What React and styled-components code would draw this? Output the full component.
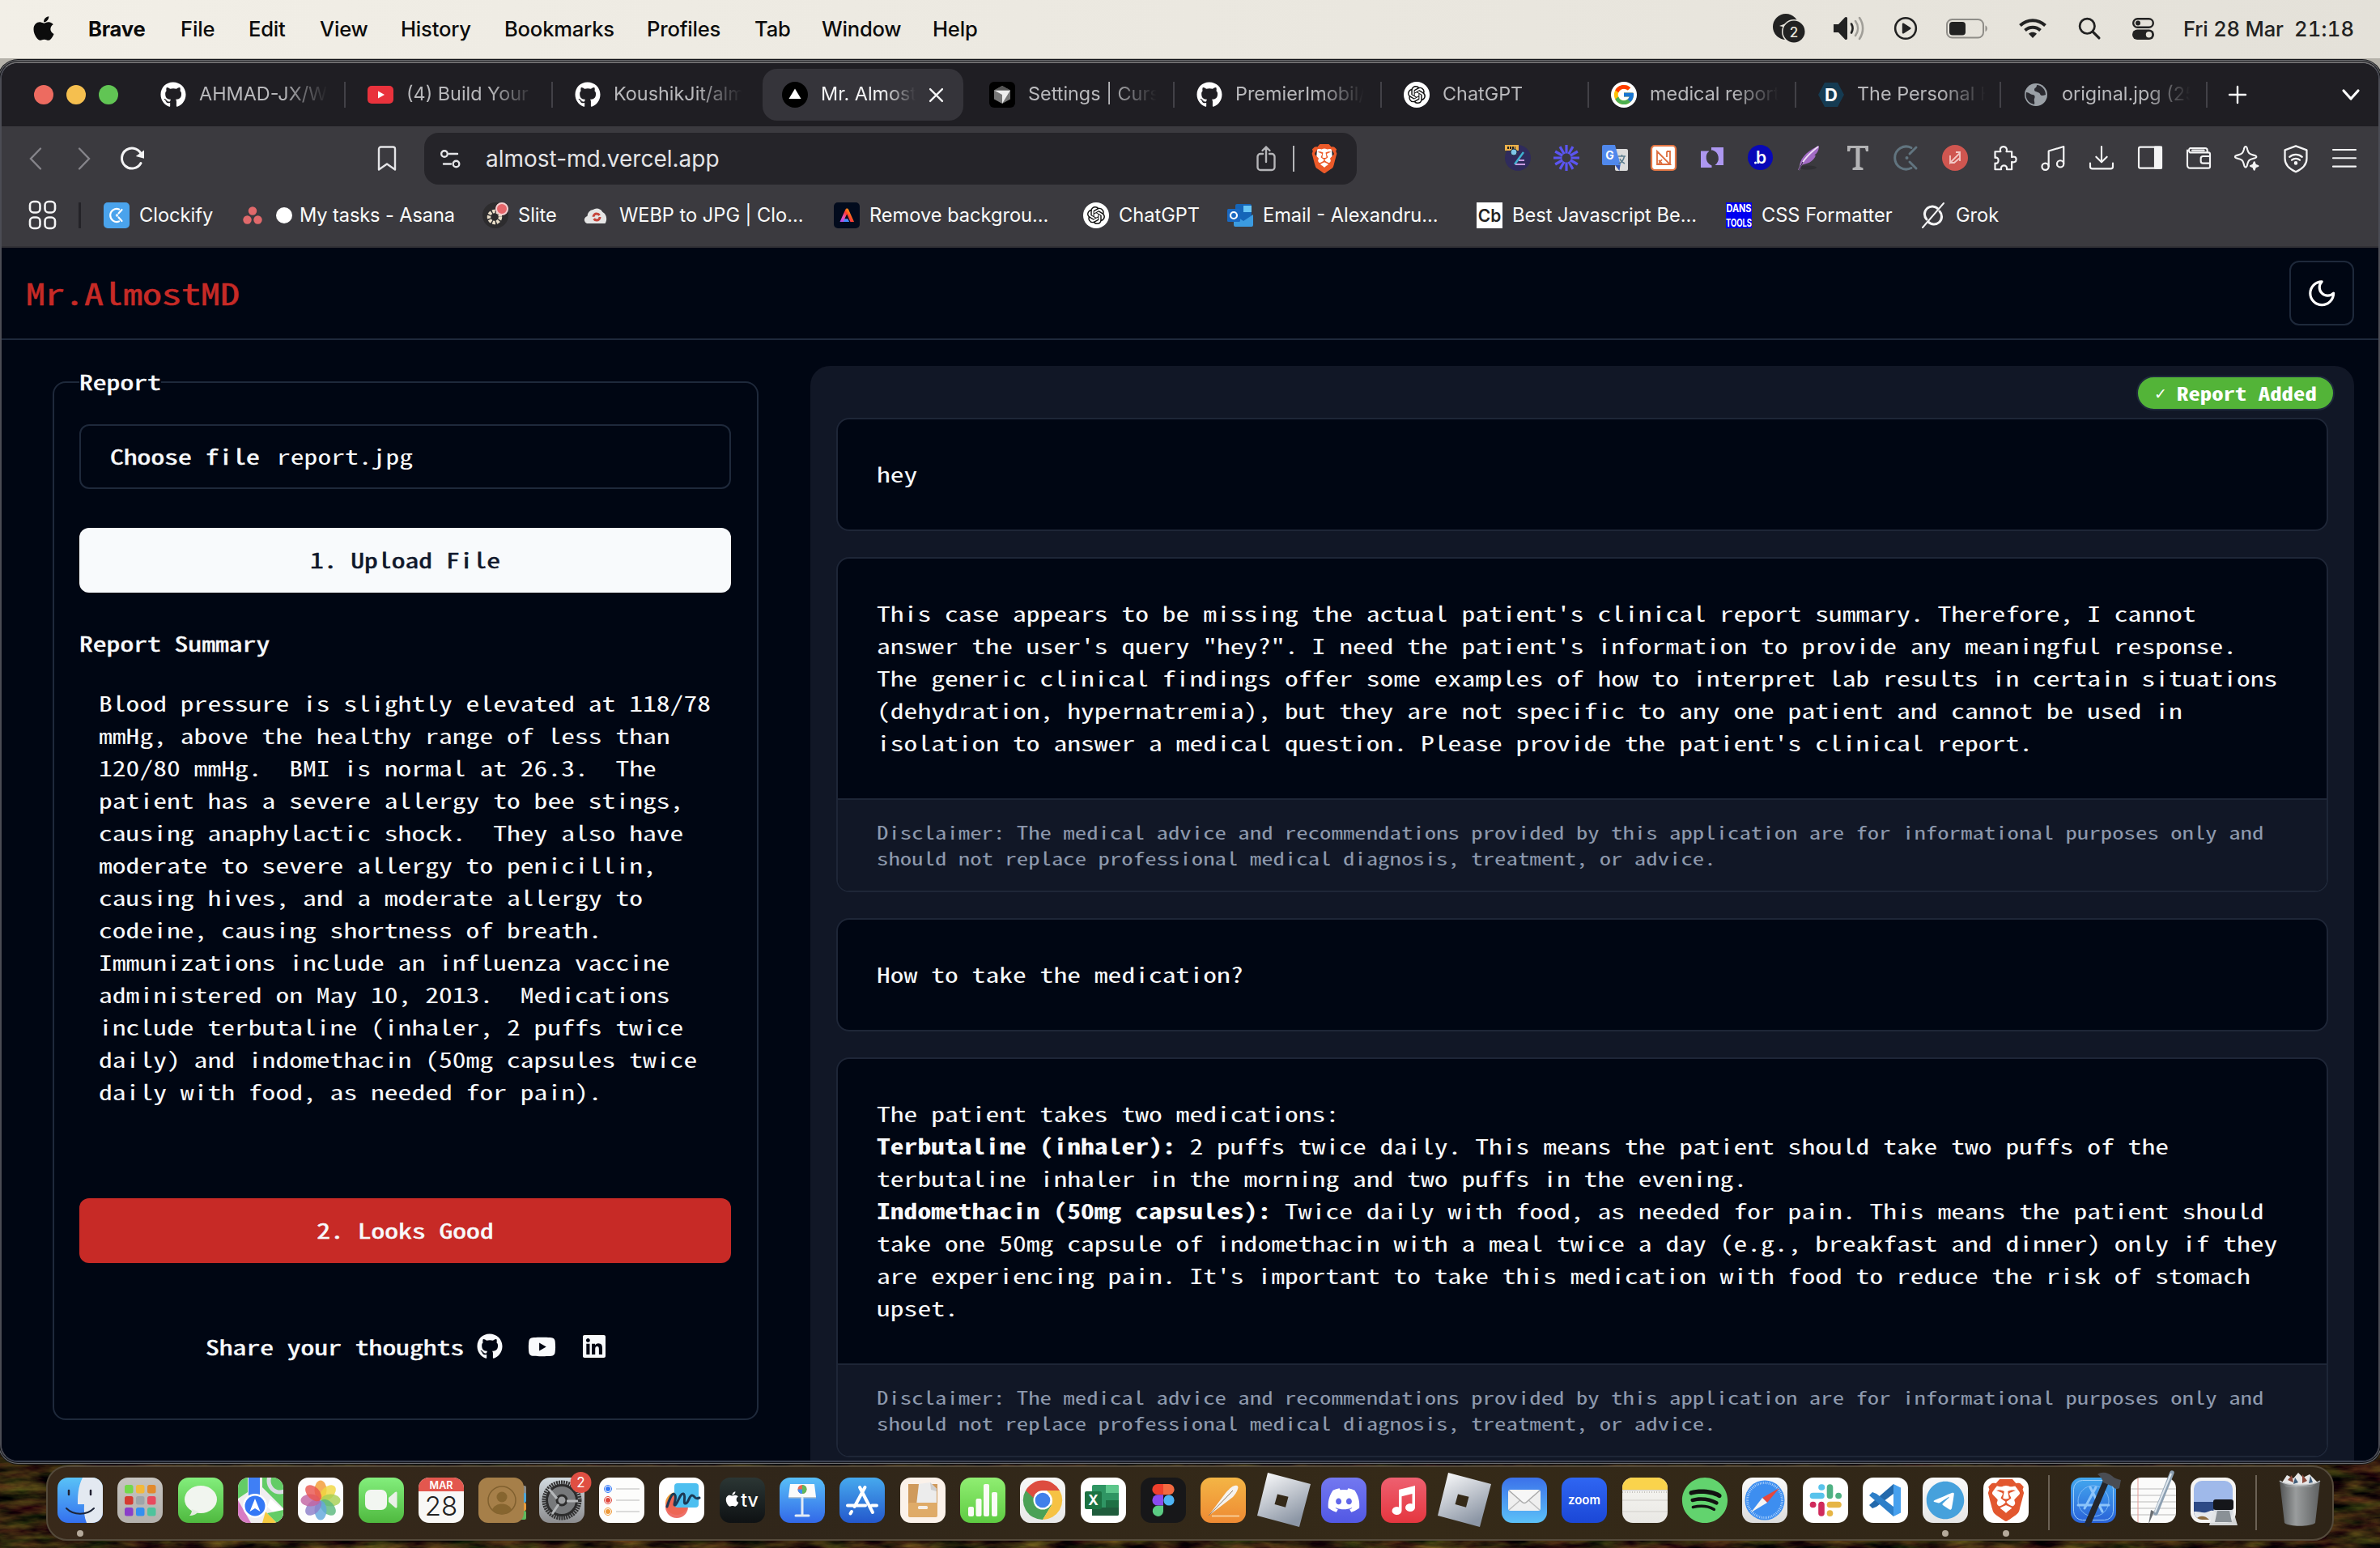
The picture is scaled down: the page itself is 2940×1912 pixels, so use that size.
import React from "react";
import styled, { createGlobalStyle, css } from "styled-components";
import { FaApple, FaGithub, FaYoutube, FaLinkedin, FaDiscord } from "react-icons/fa";
import { FaSpotify, FaTelegram } from "react-icons/fa6";
import { FcGoogle } from "react-icons/fc";
import { SiOpenai, SiBrave } from "react-icons/si";

const ui = '"Inter", "Liberation Sans", sans-serif';
const mono = '"Noto Sans Mono CJK SC", "Noto Sans Mono CJK JP", "DejaVu Sans Mono", monospace';

const GlobalStyle = createGlobalStyle`
  * { box-sizing: border-box; }
  html, body { margin: 0; padding: 0; background: #20130a; overflow: hidden; }
  svg { display: block; flex: none; overflow: visible; }
`;

const Desktop = styled.div`
  position: relative;
  width: 2940px;
  height: 1912px;
  display: flex;
  flex-direction: column;
  overflow: hidden;
  font-family: ${ui};
  background: linear-gradient(#b5b2aa 0 120px, #20130a 400px);
`;

const Wallpaper = styled.svg`
  position: absolute;
  left: 0;
  bottom: 0;
`;

/* ---------- menu bar ---------- */
const MenuBar = styled.header`
  height: 72px;
  flex: none;
  display: flex;
  align-items: center;
  padding: 0 0 2px 40px;
  background: linear-gradient(90deg, #f2efe7, #ebe8e0 50%, #e4e1d9);
  color: #0c0c0c;
`;
const AppleMark = styled(FaApple)`
  width: 28px;
  height: 34px;
  margin-right: 41px;
`;
const MenuItem = styled.span`
  width: ${(p) => p.$w}px;
  flex: none;
  font-size: 25.6px;
  font-weight: ${(p) => (p.$bold ? 700 : 450)};
  letter-spacing: ${(p) => p.$ls ?? -0.2}px;
  font-variant-numeric: tabular-nums;
  white-space: nowrap;
`;
const StatusItems = styled.div`
  margin-left: auto;
  display: flex;
  align-items: center;
  color: #222;
`;
const StatusSlot = styled.div`
  width: ${(p) => p.$w}px;
  flex: none;
`;

/* ---------- browser window ---------- */
const Window = styled.div`
  position: relative;
  width: 2940px;
  height: 1730px;
  margin-top: 4px;
  flex: none;
  display: flex;
  flex-direction: column;
  overflow: hidden;
  border: 2px solid #4b4c54;
  border-top-color: #6d6c6e;
  border-bottom-color: #3d4250;
  border-radius: 22px;
  background: #000613;
  box-shadow: 0 0 0 1px #15161a, 0 0 0 2px #6f7072, 0 0 0 3px #15161a;
`;
const TabStrip = styled.div`
  height: 78px;
  flex: none;
  display: flex;
  align-items: center;
  padding-left: 40px;
  background: #1f1e23;
`;
const TrafficLights = styled.div`
  display: flex;
  gap: 16px;
  width: 129px;
`;
const Light = styled.span`
  width: 24px;
  height: 24px;
  border-radius: 50%;
  background: ${(p) => p.$c};
`;
const Tab = styled.div`
  width: ${(p) => p.$w ?? 256}px;
  height: 64px;
  flex: none;
  display: flex;
  align-items: center;
  gap: 17px;
  padding-left: 27px;
  color: #b9b9bc;
  background: linear-gradient(#424147, #424147) right center / 2px 32px no-repeat;
  ${(p) =>
    p.$plain &&
    css`
      background: none;
    `}
  ${(p) =>
    p.$active &&
    css`
      width: 248px;
      margin: 0 5px 0 3px;
      padding-left: 24px;
      color: #f4f4f5;
      background: #35343a;
      border-radius: 18px;
    `}
`;
const TabTitle = styled.span`
  width: ${(p) => (p.$active ? 117 : 159)}px;
  overflow: hidden;
  white-space: nowrap;
  font-size: 23.4px;
  line-height: 34px;
  margin: 0 0 2px -1px;
  mask-image: linear-gradient(90deg, #000 65%, transparent 100%);
`;
const StripEnd = styled.div`
  flex: 1;
  display: flex;
  align-items: center;
  justify-content: space-between;
  padding: 0 23px 0 26px;
`;

const Toolbar = styled.div`
  height: 80px;
  flex: none;
  display: flex;
  align-items: center;
  background: #3b3a3f;
  padding-left: 33px;
`;
const NavButtons = styled.div`
  width: 431px;
  display: flex;
  align-items: center;
  gap: 42px;
  & > :last-child {
    margin-left: -6px;
  }
`;
const AddressBar = styled.div`
  width: 1152px;
  height: 64px;
  margin-left: 34px;
  padding: 0 24px 0 20px;
  display: flex;
  align-items: center;
  border-radius: 18px;
  background: #252429;
`;
const Url = styled.span`
  flex: 1;
  margin-left: 31px;
  font-size: 28px;
  color: #e4e4e7;
`;
const BarDivider = styled.span`
  width: 2px;
  height: 32px;
  margin: 0 21px;
  background: #b5b5b8;
`;
const Extensions = styled.div`
  flex: 1;
  display: flex;
  padding-left: 169px;
`;
const ExtSlot = styled.div`
  width: 60.06px;
  flex: none;
  display: flex;
  justify-content: center;
`;

const BookmarksBar = styled.div`
  height: 70px;
  flex: none;
  display: flex;
  align-items: center;
  padding: 0 0 9px 34px;
  background: #3b3a3f;
  border-bottom: 2px solid #323136;
`;
const BookmarkDivider = styled.span`
  width: 3px;
  height: 32px;
  margin: 0 28px 0 28px;
  background: #242328;
`;
const Bookmark = styled.div`
  width: ${(p) => p.$w}px;
  flex: none;
  display: flex;
  align-items: center;
  gap: 12px;
  font-size: 23.6px;
  letter-spacing: ${(p) => p.$ls ?? 0}px;
  white-space: nowrap;
  color: #fafafa;
`;
const Dot = styled.span`
  width: 20px;
  height: 20px;
  margin: 0 -3px 0 5px;
  border-radius: 50%;
  background: #fff;
`;

/* ---------- web app ---------- */
const Page = styled.div`
  flex: 1;
  min-height: 0;
  display: flex;
  flex-direction: column;
  background: #000613;
  color: #f8fafc;
  font-family: ${mono};
  line-height: 40px;
`;
const Type = styled.div`
  width: ${(p) => (p.$w ? `${p.$w}px` : "auto")};
  flex: none;
  font-size: ${(p) => p.$size ?? 26}px;
  font-weight: ${(p) => (p.$bold ? 700 : 400)};
  white-space: pre;
  -webkit-text-stroke: ${(p) => (p.$medium ? 0.5 : 0)}px currentColor;
  transform: translateY(-1px) scaleX(${(p) => ((p.$adv ?? 16.8) * 2) / (p.$size ?? 26)});
  transform-origin: ${(p) => (p.$center ? "center" : "left")};
`;
const PageHeader = styled.div`
  height: 114px;
  flex: none;
  display: flex;
  align-items: center;
  justify-content: space-between;
  padding: 0 30px;
  border-bottom: 2px solid #1e293b;
`;
const Brand = styled.h1`
  margin: 0;
  font: inherit;
  line-height: 56px;
  color: #c72a26;
`;
const ThemeButton = styled.button`
  width: 80px;
  height: 80px;
  padding: 0;
  display: flex;
  align-items: center;
  justify-content: center;
  border: 2px solid #1e293b;
  border-radius: 12px;
  background: transparent;
  color: #fff;
`;
const Columns = styled.div`
  flex: 1;
  min-height: 0;
  display: flex;
  align-items: flex-start;
  padding-left: 63px;
`;
const ReportBox = styled.fieldset`
  width: 872px;
  height: 1296px;
  margin: 38px 0 0;
  padding: 38px 32px 0 31px;
  border: 2px solid #1e293b;
  border-radius: 16px;
`;
const Legend = styled.legend`
  padding: 0;
  line-height: 28px;
`;
const FileInput = styled.div`
  height: 80px;
  padding: 0 36px;
  display: flex;
  align-items: center;
  gap: 21px;
  border: 2px solid #1e293b;
  border-radius: 12px;
`;
const Button = styled.button`
  display: block;
  width: 100%;
  height: 80px;
  margin: ${(p) => p.$top}px 0 0;
  padding: 0;
  border: 0;
  border-radius: 12px;
  font: inherit;
  color: ${(p) => (p.$danger ? "#f8fafc" : "#0f172a")};
  background: ${(p) => (p.$danger ? "#c72a26" : "#f8fafc")};
`;
const SummaryLabel = styled.div`
  margin-top: 43px;
`;
const Summary = styled.div`
  margin: 34px 0 0;
  padding-left: 24px;
`;
const ShareRow = styled.div`
  height: 48px;
  margin-top: 79px;
  display: flex;
  align-items: center;
  justify-content: center;
`;
const ShareText = styled.span`
  margin: 2px 16px 0 2px;
`;
const ShareLinks = styled.span`
  display: flex;
  align-items: center;
  gap: 31px;
`;

const Chat = styled.section`
  position: relative;
  width: 1907px;
  align-self: stretch;
  margin: 32px 0 0 64px;
  padding: 64px 32px 0;
  overflow: hidden;
  border-radius: 24px 24px 0 0;
  background: #111726;
`;
const AddedBadge = styled.div`
  position: absolute;
  top: 12px;
  right: 24px;
  height: 43px;
  width: 245px;
  display: flex;
  align-items: center;
  justify-content: center;
  gap: 14px;
  border: 2px solid #1e293b;
  border-radius: 22px;
  line-height: 36px;
  color: #fff;
  background: #53b438;
`;
const Check = styled.span`
  width: 14px;
  font-family: "DejaVu Sans", sans-serif;
  font-size: 19px;
  font-weight: 700;
`;
const Card = styled.article`
  margin-bottom: 32px;
  overflow: hidden;
  border: 2px solid #1e2637;
  border-radius: 16px;
  background: #000613;
`;
const CardBody = styled.div`
  padding: 48px;
`;
const CardFooter = styled.footer`
  padding: 24px 48px;
  border-top: 2px solid #1e2637;
  line-height: 32px;
  color: #8d99ad;
  background: #111726;
`;

/* ---------- dock ---------- */
const DockArea = styled.div`
  position: relative;
  padding: 4px 0 0 57px;
`;
const DockBar = styled.nav`
  width: 2826px;
  height: 93px;
  display: flex;
  align-items: flex-start;
  padding: 13px 0 0 3px;
  border: 2px solid #544a3b;
  border-radius: 26px;
  background: linear-gradient(90deg, #38291a, #30261a 30%, #352a18 60%, #2e2417);
`;
const DockSlot = styled.div`
  width: ${(p) => p.$w ?? 74.33}px;
  flex: none;
  display: flex;
  flex-direction: column;
  align-items: center;
  gap: 9px;
`;
const RunningDot = styled.span`
  width: 8px;
  height: 8px;
  border-radius: 50%;
  background: #b5aa9b;
`;
const DockDivider = styled.span`
  width: 2px;
  height: 68px;
  margin: ${(p) => p.$m};
  background: #6b6154;
`;

/* ---------- small drawings ---------- */
const Line = ({ s = 32, v = 24, w = 1.6, c = "#f4f4f5", children }) => (
  <svg width={s} height={s} viewBox={`0 0 ${v} ${v}`} fill="none" stroke={c} strokeWidth={w} strokeLinecap="round" strokeLinejoin="round">
    {children}
  </svg>
);
const Pic = ({ s = 32, children }) => (
  <svg width={s} height={s} viewBox="0 0 32 32">{children}</svg>
);
const T = (p) => <text textAnchor="middle" fontFamily="Inter, sans-serif" {...p} />;

const Github = () => <FaGithub size={32} color="#fff" />;
const ChatGpt = () => (
  <Pic>
    <circle cx="16" cy="16" r="16" fill="#fff" />
    <SiOpenai x="5" y="5" size={22} color="#111" />
  </Pic>
);
const BraveLion = ({ w = 32, h = 36 }) => (
  <svg width={w} height={h} viewBox="0 0 32 36">
    <path d="M7 6L16 4l9 2 1 12-4 9-6 5-6-5-4-9z" fill="#fff" />
    <SiBrave x="-2" y="0" size={36} color="#ec5a29" />
  </svg>
);

const tabs = [
  { t: "AHMAD-JX/WhatsApp", i: <Github /> },
  {
    t: "(4) Build Your Own",
    i: <Pic><rect y="5" width="32" height="22" rx="5" fill="#e9323c" /><path d="M13 11.500v9l8-4.500z" fill="#fff" /></Pic>,
  },
  { t: "KoushikJit/almost", i: <Github />, plain: true },
  {
    t: "Mr. AlmostMD",
    active: true,
    i: <Pic><circle cx="16" cy="16" r="16" fill="#000" /><path d="M16 8.500l7.500 12.500h-15z" fill="#fff" /></Pic>,
  },
  {
    t: "Settings | Cursor",
    i: (
      <Pic>
        <rect width="32" height="32" rx="6" fill="#000" />
        <path d="M16 5l10 5.500v11L16 27 6 21.500v-11z" fill="#777" />
        <path d="M6 10.500h20L16 27v-11z" fill="#eee" />
        <path d="M16 5l10 5.500H6z" fill="#555" />
      </Pic>
    ),
  },
  { t: "PremierImobil/app", i: <Github /> },
  { t: "ChatGPT", i: <ChatGpt /> },
  { t: "medical report im", i: <Pic><circle cx="16" cy="16" r="16" fill="#fff" /><FcGoogle x="1.500" y="1.500" size={29} /></Pic> },
  {
    t: "The Personal Ho",
    w: 253,
    i: <Pic><path d="M8 1h16l8 15-8 15H8L0 16z" fill="#153b52" /><T x="16" y="24" fontSize="22" fontWeight="700" fill="#fff">D</T></Pic>,
  },
  {
    t: "original.jpg (2552",
    w: 255,
    i: (
      <Pic>
        <circle cx="16" cy="16" r="14" fill="#9aa0a6" />
        <path d="M4 13c4 0 5 3 8 3s3 3 2 5 1 4 0 7C7 27 2 20 4 13zM17 4c0 4-3 3-3 6s6 2 7 5 4 2 7 1c0-6-5-12-11-12z" fill="#2a2a30" />
      </Pic>
    ),
  },
];

const Spokes = () => (
  <g fill="none" stroke="#fff" strokeWidth="2.200" strokeLinecap="round">
    <path d="M19 8.500a8 8 0 1 0 0 15" />
    <path d="M18.500 13.500l4-4.500M18.500 18.500l4 4.500" />
    <circle cx="16.500" cy="16" r=".6" />
  </g>
);

const bookmarks = [
  { t: "Clockify", w: 172, i: <Pic><rect width="32" height="32" rx="5" fill="#4aa3ec" /><Spokes /></Pic> },
  {
    t: "My tasks - Asana", w: 296, dot: true, ls: -0.1,
    i: <svg width="24" height="24" viewBox="0 0 24 24" fill="#e0696b"><circle cx="12" cy="6.500" r="5.200" /><circle cx="5.500" cy="17.500" r="5.200" /><circle cx="18.500" cy="17.500" r="5.200" /></svg>,
  },
  {
    t: "Slite", w: 125, ls: 0,
    i: (
      <Pic>
        <circle cx="16" cy="16" r="16" fill="#2d2c2e" />
        <circle cx="15" cy="18" r="7" fill="none" stroke="#e8ddc8" strokeWidth="4.500" strokeDasharray="3.500 1.500" />
        <circle cx="24" cy="8" r="7" fill="#e5666b" stroke="#f5cfd0" strokeWidth="2" />
      </Pic>
    ),
  },
  {
    t: "WEBP to JPG | Clo...", w: 309,
    i: (
      <Pic>
        <path d="M6.500 26a4.500 4.500 0 0 1-2-9 8 8 0 0 1 7-8 8 8 0 0 1 12 3c5 3 6 9 3 14z" fill="#e5e5e5" />
        <circle cx="16" cy="18" r="4" fill="none" stroke="#c5443b" strokeWidth="3" strokeDasharray="10 2.500" />
      </Pic>
    ),
  },
  {
    t: "Remove backgrou...", w: 308,
    i: (
      <Pic>
        <defs>
          <linearGradient id="adobe" x1="0" y1="1" x2="1" y2="0.3"><stop offset="0" stopColor="#9b4dff" /><stop offset=".35" stopColor="#e84fb0" /><stop offset=".6" stopColor="#ff3b2f" /><stop offset="1" stopColor="#ffd400" /></linearGradient>
        </defs>
        <rect width="32" height="32" rx="5" fill="#020b1d" />
        <path d="M7.500 24l7-15.500c.5-1.500 3-1.500 3.500 0L25 24h-4.500l-4.300-9.500-3 6h4l1.500 3.500z" fill="url(#adobe)" />
        <path d="M13 20.500h4.500l1.500 3.500h-7z" fill="#3f8cff" />
      </Pic>
    ),
  },
  { t: "ChatGPT", w: 178, i: <ChatGpt /> },
  {
    t: "Email - Alexandru...", w: 308,
    i: (
      <Pic>
        <rect x="10" y="2" width="20" height="24" rx="2" fill="#1565b8" />
        <rect x="20" y="4" width="10" height="8" fill="#67c4f5" />
        <path d="M8 15l12 8 12-8v13a2 2 0 0 1-2 2H10a2 2 0 0 1-2-2z" fill="#3b9be0" />
        <rect x="0" y="8" width="16" height="16" rx="1.500" fill="#1a68c0" />
        <circle cx="8" cy="16" r="4" fill="none" stroke="#fff" strokeWidth="2.200" />
      </Pic>
    ),
  },
  {
    t: "Best Javascript Be...", w: 308,
    i: <Pic><rect width="32" height="32" fill="#fff" /><T x="16" y="23.500" fontSize="21" fontWeight="600" fill="#222">Cb</T></Pic>,
  },
  {
    t: "CSS Formatter", w: 240,
    i: (
      <Pic>
        <rect width="32" height="32" fill="#0000f0" />
        <T x="16" y="12" fontSize="13" fontWeight="700" fill="#fff" textLength="31" lengthAdjust="spacingAndGlyphs">DANS</T>
        <T x="16" y="30" fontSize="13" fontWeight="700" fill="#fff" textLength="32" lengthAdjust="spacingAndGlyphs">TOOLS</T>
      </Pic>
    ),
  },
  {
    t: "Grok", w: 110,
    i: <Line s={32} v={32} w={3}><path d="M22 8a9.500 9.500 0 0 0-14 13M10 24a9.500 9.500 0 0 0 14-13" /><path d="M29 1L3 31" strokeWidth="2" /></Line>,
  },
];

const extensions = [
  <Pic><circle cx="16" cy="16" r="16" fill="#2f2b5c" /><path d="M23 9L12 24" stroke="#3db1cf" strokeWidth="2.500" /><path d="M17 19h7M13 24h12" stroke="#c69ae0" strokeWidth="2" /><rect x="0" y="0" width="17" height="7" fill="#edb24a" /><path d="M3 3.500h10" stroke="#222" strokeWidth="3" strokeDasharray="2 1" /><circle cx="11" cy="9" r="4" fill="#7fc7e8" stroke="#234" strokeWidth="1" /></Pic>,
  <Pic><g stroke="#5b55f0" strokeWidth="3.200">{[...Array(12)].map((_, i) => <path key={i} d="M16 0v10.500" transform={`rotate(${i * 30} 16 16)`} />)}</g></Pic>,
  <Pic><rect x="16" y="5" width="16" height="27" rx="2" fill="#dcdcdc" /><path d="M16 25l5.500 7 1-7z" fill="#3355b5" /><path d="M2 0h14l7 25H2a2 2 0 0 1-2-2V2a2 2 0 0 1 2-2z" fill="#5088ec" /><T x="9.500" y="18" fontSize="14" fontWeight="700" fill="#fff">G</T><path d="M20 14h9M24.500 12v2M27.500 14c-1 5-4 8-7 9.500M22 17c1 3 4 5 6 6" stroke="#5c7d8f" strokeWidth="1.500" fill="none" /></Pic>,
  <Pic><rect x="1" y="1" width="30" height="30" rx="4" fill="#fff" stroke="#e37543" strokeWidth="2.200" /><path d="M8 8l16 16H8zM20 8h4v16M8 8v16M20 8v7M10 19l4 4M14 18l-4 5" fill="none" stroke="#dd6d3e" strokeWidth="1.800" /></Pic>,
  <Pic><path d="M2 7.500h10.500a10.500 10.500 0 0 0 3 18V28H2zM15 3h15v22h-10.500a10.500 10.500 0 0 0-3-18.500H15z" fill="#ad97f0" /></Pic>,
  <Pic><circle cx="15.500" cy="15.500" r="15.500" fill="#0808b8" /><T x="16.500" y="23" fontSize="21" fontWeight="600" fill="#fff">b</T><circle cx="9.500" cy="22" r="1.500" fill="#fff" /></Pic>,
  <Pic><ellipse cx="14" cy="28" rx="11" ry="2.500" fill="#2a292d" opacity=".6" /><path d="M28 1C16 6 6 14 4 25c9-1 17-4 20-12-1 0-2 0-1-1 3-2 5-6 5-11z" fill="#a26bc4" /><path d="M27 2C17 10 8 18 3 31" stroke="#efe0f7" strokeWidth="1.800" fill="none" /><path d="M3 31l5-10" stroke="#4d2a66" strokeWidth="1.600" /></Pic>,
  <Pic><path d="M3 1h26v7h-3l-1-4h-6.500v23l4 1.500V31h-13v-2.500l4-1.500V4H7L6 8H3z" fill="#b3b3b5" /></Pic>,
  <Pic><g fill="none" stroke="#61747f" strokeWidth="3" strokeLinecap="round"><path d="M22 3.500a14 14 0 1 0 0 25" /><path d="M20 11l8-8M20 21l8 8" /></g><circle cx="16.500" cy="16" r="2" fill="#61747f" /></Pic>,
  <Pic><circle cx="16" cy="16" r="16" fill="#cf5650" /><path d="M10 13v9l12-12v10M17 9h5v5M10 17v5h5l7-6" stroke="#f3c9c6" strokeWidth="1.800" fill="none" /></Pic>,
  <Line s={33}><path d="M4 6h5c-.8-1.500-.5-4.500 2.500-4.500S15 4.500 14.200 6H19v5c1.500-.8 4-.5 4 2s-2.500 3-4 2.200V22h-4.500c.5-2-.5-3.500-2.500-3.500S9 20 9.500 22H4v-5.500c2 .5 3-.8 3-2.500s-1-3-3-2.500z" /></Line>,
  <Line s={33}><path d="M8.500 19V5.500L22 1.500v15" /><circle cx="5.500" cy="19.500" r="3" /><circle cx="19" cy="17" r="3" /></Line>,
  <Line s={32}><path d="M12 1.500v14M7 11l5 5 5-5M1.500 17v3a2 2 0 0 0 2 2h17a2 2 0 0 0 2-2v-3" /></Line>,
  <Line s={32}><rect x="1.500" y="2" width="21" height="19.500" rx="1.500" /><path d="M16.500 2h6v19.500h-6z" fill="#f4f4f5" /></Line>,
  <Line s={32}><path d="M20 7V5a2 2 0 0 0-2-2H4a2.500 2.500 0 0 0 0 4h17a1.500 1.500 0 0 1 1.500 1.500V20a1.500 1.500 0 0 1-1.500 1.500H4A2.500 2.500 0 0 1 1.500 19V5M22.500 10.500H16a2 2 0 0 0-2 2V15a2 2 0 0 0 2 2h6.500M6 5h11" /></Line>,
  <Line s={32}><path d="M10.500 1.500c1.200 0 1.300 1.200 1.700 3 .8 3 1.800 4 5 4.800 2 .5 3.300.7 3.300 1.700s-1.300 1.200-3.300 1.700c-3.200.8-4.200 1.800-5 5-.4 1.800-.5 3-1.700 3s-1.300-1.200-1.700-3c-.8-3.200-1.800-4.200-5-5C2 12.200.7 12 .7 11s1.300-1.200 3.100-1.700c3.200-.8 4.200-1.800 5-4.800.4-1.800.5-3 1.700-3z" /><path d="M18.500 16l1 2.500 2.500 1-2.500 1-1 2.500-1-2.500-2.500-1 2.500-1z" fill="#f4f4f5" /></Line>,
  <Line s={34}><path d="M12 1l9.500 3.500V12c0 5.500-4 9-9.500 11.500C6.500 21 2.500 17.500 2.500 12V4.500z" /><path d="M6.500 10.500c3.200-2.800 7.800-2.800 11 0M8.500 13.200c2-1.700 5-1.700 7 0" /><circle cx="12" cy="15.800" r=".8" fill="#f4f4f5" /></Line>,
  <Line s={32}><path d="M1.500 4.500h21M1.500 12.200h21M1.500 20h21" /></Line>,
];

/* dock icons share a 56-unit square */
const Tile = ({ fill, children, a, b }) => {
  const id = React.useId();
  return (
    <svg width="56" height="56" viewBox="0 0 56 56">
      <defs>
        <linearGradient id={id} x2="0" y2="1"><stop stopColor={a ?? fill} /><stop offset="1" stopColor={b ?? fill} /></linearGradient>
        <clipPath id={id + "c"}><rect width="56" height="56" rx="13" /></clipPath>
      </defs>
      <rect width="56" height="56" rx="13" fill={`url(#${id})`} />
      <g clipPath={`url(#${id}c)`}>{children}</g>
    </svg>
  );
};
const Free = ({ w = 56, children }) => <svg width={w} height="56" viewBox={`0 0 ${w} 56`}>{children}</svg>;
const petals = ["#f39b35", "#f0d73f", "#a8cf53", "#5cb87e", "#62a7dc", "#8c7fc9", "#c264a2", "#e9564f"];
const Roblox = () => (
  <Free>
    <defs><linearGradient id="rbx" x1="0" y1="0" x2=".5" y2="1"><stop stopColor="#fff" /><stop offset="1" stopColor="#8c96a5" /></linearGradient></defs>
    <path d="M8 -6L61 8 47 61-5 47zM20 20.500l-3.500 12.500 13.500 3.800 3.500-13z" fill="url(#rbx)" fillRule="evenodd" />
  </Free>
);

const dock = [
  { n: "Finder", run: true, i: <Tile a="#59c2f7" b="#3470ee"><path d="M31 0C25 12 25 24 25 33h8c-.5 8 0 16 3 23h20V0z" fill="#e3e9f1" /><path d="M14 16v5M41 16v5" stroke="#223" strokeWidth="2.500" strokeLinecap="round" /><path d="M11 38c9 9 25 9 34 0" stroke="#1d2538" strokeWidth="2" fill="none" strokeLinecap="round" /></Tile> },
  { n: "Launchpad", i: <Tile a="#c6c4c0" b="#b4b1ad">{["#73d84b", "#f2b93b", "#e28a2d", "#d43b31", "#9ea5a9", "#e84a5f", "#8a3fc9", "#348ff0", "#4fc39c"].map((c, k) => <rect key={k} x={9 + (k % 3) * 14} y={9 + Math.floor(k / 3) * 14} width="10.500" height="10.500" rx="2.500" fill={c} />)}</Tile> },
  { n: "Messages", i: <Tile a="#83ee7c" b="#4fb93f"><ellipse cx="28" cy="27" rx="20" ry="17" fill="#f1f5ef" /><path d="M17 39c0 4-1 6-3 8 5 0 9-2 11-5z" fill="#e5ece2" /></Tile> },
  { n: "Maps", i: <Tile fill="#f0eef0"><path d="M30 0h26v38L30 12z" fill="#63cc66" /><path d="M0 4v22l12-8V0H4z" fill="#63cc66" /><circle cx="52" cy="4" r="14" fill="none" stroke="#dcdce4" strokeWidth="5" /><path d="M13 0h14v24H13z" fill="#3f7ff5" /><path d="M0 28l16 28H0z" fill="#d77bc4" /><path d="M30 56h18L34 42z" fill="#f5cb42" /><path d="M36 36l20 18v-14L40 26z" fill="#fff" /><path d="M56 40v16h-8L36 44z" fill="#63cc66" /><circle cx="21" cy="35" r="15" fill="#fff" /><circle cx="21" cy="35" r="12.500" fill="#3478f6" /><path d="M21 26l6.500 16-6.500-4-6.500 4z" fill="#fff" /></Tile> },
  { n: "Photos", i: <Tile fill="#fdfdfd">{petals.map((c, k) => <ellipse key={k} cx="28" cy="15.500" rx="7.500" ry="12" fill={c} opacity=".82" transform={`rotate(${k * 45} 28 28)`} />)}</Tile> },
  { n: "FaceTime", i: <Tile a="#83ee7c" b="#4fb93f"><rect x="8" y="15" width="27" height="25" rx="7" fill="#f2f6f1" /><path d="M37 25l8-7c1.500-1 2.500-.5 2.500 1v17c0 1.500-1 2-2.500 1l-8-7z" fill="#e9f0e7" /></Tile> },
  { n: "Calendar", i: <Tile fill="#f9f8f6"><rect width="56" height="17" fill="#e3574e" /><T x="28" y="13.500" fontSize="12.500" fontWeight="600" fill="#fff">MAR</T><T x="28" y="47" fontSize="33" fontWeight="300" fill="#222">28</T></Tile> },
  { n: "Contacts", i: <Free><rect x="50" y="10" width="9" height="12" rx="2" fill="#8b8b88" /><rect x="50" y="19" width="9" height="12" rx="2" fill="#4ba5d8" /><rect x="50" y="31" width="9" height="10" rx="2" fill="#e89b3b" /><rect x="50" y="41" width="9" height="11" rx="2" fill="#5fb95d" /><rect width="56" height="56" rx="12" fill="#a67f49" /><circle cx="29" cy="28" r="17" fill="none" stroke="#80602f" strokeWidth="1.500" /><circle cx="29" cy="24" r="6.500" fill="#86652f" /><path d="M17 40c3-10 21-10 24 0-6 7-18 7-24 0z" fill="#86652f" /></Free> },
  { n: "Settings", i: <Free><defs><linearGradient id="set" x2="0" y2="1"><stop stopColor="#d2dbe0" /><stop offset="1" stopColor="#8d8d8f" /></linearGradient></defs><rect width="56" height="56" rx="13" fill="url(#set)" /><circle cx="28" cy="28" r="22" fill="none" stroke="#333" strokeWidth="5" strokeDasharray="2 1" /><circle cx="28" cy="28" r="18.500" fill="#77797b" stroke="#2c2c2c" strokeWidth="3" /><circle cx="28" cy="28" r="6" fill="#9a9c9e" stroke="#2c2c2c" strokeWidth="3" /><path d="M22 26L12 14M34 29h14M24 33L16 45" stroke="#b5b8ba" strokeWidth="3" /><circle cx="51.500" cy="6" r="13" fill="#e04f43" /><T x="51.500" y="12" fontSize="17" fill="#fff">2</T></Free> },
  { n: "Reminders", i: <Tile fill="#fdfdfc">{["#3478f6", "#e0483e", "#ee9a3a"].map((c, k) => <g key={k}><circle cx="11" cy={14 + k * 14} r="4.500" fill="#fff" stroke={c} strokeWidth="1" /><circle cx="11" cy={14 + k * 14} r="3" fill={c} /><path d={`M21 ${14 + k * 14}h29`} stroke="#cfcfcf" strokeWidth="1.300" /></g>)}</Tile> },
  { n: "Freeform", i: <Tile fill="#fff"><circle cx="22" cy="32" r="14" fill="#f4a23c" /><circle cx="22" cy="36" r="14" fill="#ec6158" opacity=".9" /><rect x="19" y="7" width="30" height="30" rx="4" fill="#4dbff0" /><path d="M10 36c5-16 8-18 10-14s-3 13 0 12 6-15 10-14-1 13 3 12 4-10 8-10 2 6 9 3" stroke="#1d3a55" strokeWidth="3" fill="none" strokeLinecap="round" /></Tile> },
  { n: "TV", i: <Tile a="#2b3634" b="#0e1113"><FaApple x="5" y="16" size={21} color="#fff" /><T x="37" y="36" fontSize="23" fontWeight="500" fill="#fff">tv</T></Tile> },
  { n: "Keynote", i: <Tile a="#58bff8" b="#3268e8"><path d="M13 8h30l2 16H11z" fill="#fbfbfb" /><circle cx="28" cy="14.500" r="5.500" fill="#e8674d" /><path d="M28 9a5.500 5.500 0 0 1 0 11z" fill="#5fb95d" /><path d="M28 14.500h-5.500a5.500 5.500 0 0 0 5.500 5.500z" fill="#3f8ff5" /><path d="M11 24h34v1.500H11z" fill="#b8c4d0" /><path d="M28 25v22M20 47h16" stroke="#e3ebf5" strokeWidth="3" strokeLinecap="round" /></Tile> },
  { n: "App Store", i: <Tile a="#46a9ee" b="#2458cc"><g stroke="#fff" strokeWidth="4" strokeLinecap="round"><path d="M31.500 12L18.500 36M25 12l16 31M10 34.500h22M40 34.500h6M15 42l-1.500 2.500" /></g></Tile> },
  { n: "Archive", i: <Tile fill="#fbf2ea"><rect x="10" y="8" width="36" height="26" fill="#cf9a5c" /><path d="M23 8l14-2 8 8v20H20z" fill="#ececec" /><path d="M37 6l1 9 7 2v-3z" fill="#cfcfcf" /><rect x="10" y="31" width="36" height="18" rx="2" fill="#dfab68" /><rect x="22" y="35" width="12" height="4" rx="1.500" fill="#f6efe6" /></Tile> },
  { n: "Numbers", i: <Tile a="#90ee72" b="#5ecb42"><g fill="#fbfbf6"><rect x="10" y="36" width="7" height="12" rx="2" /><rect x="19.500" y="26" width="7" height="22" rx="2" /><rect x="29" y="8" width="7" height="40" rx="2" /><rect x="39" y="18" width="7" height="30" rx="2" /></g></Tile> },
  { n: "Chrome", i: <Tile a="#f7f7f7" b="#e8e8e8"><path d="M7 16A24 24 0 0 0 28 52l11-18-11-6z" fill="#4ba156" /><path d="M49 16A24 24 0 0 1 28 52l11-18c3-7 0-13-6-18z" fill="#f6c244" /><path d="M7 16a24 24 0 0 1 42 0H28c-6 0-10 4-11.500 9z" fill="#dd4c3f" /><circle cx="28" cy="28" r="11.500" fill="#fff" /><circle cx="28" cy="28" r="9.300" fill="#4080ea" /></Tile> },
  { n: "Excel", i: <Tile fill="#fff"><rect x="14" y="9" width="33" height="38" rx="2" fill="#2f9563" /><path d="M31 9h14a2 2 0 0 1 2 2v8H31z" fill="#5cc68b" /><path d="M31 28h16v9H31z" fill="#1e7044" /><path d="M14 37h33v8a2 2 0 0 1-2 2H14z" fill="#1f5c3c" /><rect x="5" y="17" width="21" height="22" rx="2" fill="#1c7343" /><T x="15.500" y="34" fontSize="17" fontWeight="700" fill="#fff">X</T></Tile> },
  { n: "Figma", i: <Tile fill="#171719"><path d="M28 8h-7a6.600 6.600 0 0 0 0 13.300h7z" fill="#ee3f2c" /><path d="M28 8h7a6.600 6.600 0 0 1 0 13.300h-7z" fill="#f26a41" /><path d="M28 21.300h-7a6.600 6.600 0 0 0 0 13.300h7z" fill="#8a4bf0" /><circle cx="35" cy="28" r="6.600" fill="#4eb4f5" /><path d="M28 34.700h-7a6.600 6.600 0 1 0 7 6.600z" fill="#5bcb83" /></Tile> },
  { n: "Pages", i: <Tile a="#f4b545" b="#ee8a33"><path d="M10 47L31 19c7-8 11-10 14-9s1 7-5 14z" fill="#f6f3ef" /><path d="M10 47l30-31" stroke="#8b7a66" strokeWidth="1" /><path d="M14 47.500h34" stroke="#fbdcae" strokeWidth="1.500" /></Tile> },
  { n: "Roblox", i: <Roblox /> },
  { n: "Discord", i: <Tile a="#7378f0" b="#5258e4"><FaDiscord x="7" y="7" size={42} color="#fff" /></Tile> },
  { n: "Music", i: <Tile a="#ee6070" b="#e5363f"><path d="M22 15l20-5v27a6 5 0 1 1-3.500-4.500V20l-13 3.200V41a6 5 0 1 1-3.500-4.500z" fill="#fff" /></Tile> },
  { n: "Roblox Studio", i: <Roblox /> },
  { n: "Mail", i: <Tile a="#3b71ea" b="#5cc1f8"><rect x="8" y="15" width="40" height="26" rx="3" fill="#efefef" /><path d="M9 40l15-13M47 40L32 27" stroke="#bdbdbd" strokeWidth="1.500" /><path d="M9 16l16 14c2 2 4 2 6 0l16-14" stroke="#aaa" strokeWidth="1.500" fill="#f7f7f7" /></Tile> },
  { n: "Zoom", i: <Tile a="#2f66f2" b="#1b47d6"><T x="28" y="32.500" fontSize="15" fontWeight="600" fill="#fff">zoom</T></Tile> },
  { n: "Notes", i: <Tile a="#f7f6f3" b="#e9e8e4"><rect width="56" height="15" fill="#fad34c" /><path d="M0 15.500h56M0 28h56M0 42h56" stroke="#d0cec9" strokeWidth="1" /><path d="M0 18h56" stroke="#b9b7b0" strokeWidth="1.500" strokeDasharray="1 2" /></Tile> },
  { n: "Spotify", i: <Free><circle cx="28" cy="28" r="25" fill="#111" /><FaSpotify x="-1" y="-1" size={58} color="#62d36e" /></Free> },
  { n: "Safari", i: <Tile a="#fafafa" b="#dcdcdc"><circle cx="28" cy="28" r="24.500" fill="#3d8ef0" /><circle cx="28" cy="28" r="21.500" fill="none" stroke="#cfe4fb" strokeWidth="3" strokeDasharray=".7 1.500" /><path d="M46 13L31 31l-6-6z" fill="#e5483e" /><path d="M11 43l20-12-6-6z" fill="#f5f5f5" /></Tile> },
  { n: "Slack", i: <Tile fill="#fff"><g strokeWidth="7.600" strokeLinecap="round"><path d="M23 22.500H12.500" stroke="#58c3ec" /><path d="M23.500 12h-.5" stroke="#58c3ec" /><path d="M33.500 12v10.500" stroke="#4fb183" /><path d="M44 22.500h.2" stroke="#4fb183" /><path d="M44 33.500H33.500" stroke="#e6b545" /><path d="M33.500 44v.2" stroke="#e6b545" /><path d="M23 44V33.500" stroke="#d02b5c" /><path d="M12.500 33.500h.2" stroke="#d02b5c" /></g></Tile> },
  { n: "VS Code", i: <Tile fill="#fff"><path d="M38 8L8 34l4 4 5-2 21-16z" fill="#2369ac" /><path d="M38 48L8 22l4-4 5 2 21 16z" fill="#2d7fc9" /><path d="M38 8l9 4.500v31L38 48z" fill="#46a0ee" /></Tile> },
  { n: "Telegram", run: true, i: <Tile a="#fafafa" b="#e6e6e6"><circle cx="28" cy="28" r="22" fill="#fff" /><FaTelegram x="4" y="4" size={48} color="#46a1dc" /></Tile> },
  { n: "Brave", run: true, i: <Tile fill="#fff"><SiBrave x="2" y="2" size={52} color="#e2572f" /></Tile> },
];

const utilities = [
  { n: "Xcode", i: <Tile a="#43a8ef" b="#2a62d8"><rect x="3.500" y="3.500" width="49" height="49" rx="11" fill="none" stroke="#9ed0fa" strokeWidth="1" /><circle cx="28" cy="29" r="19" fill="none" stroke="#7fbaf5" /><g stroke="#8cc4fa" strokeWidth="3" strokeLinecap="round"><path d="M31 12L17 38M24 12l15 30M9 34h38" /></g></Tile>, over: "hammer" },
  { n: "TextEdit", i: <Tile fill="#fbfbfa"><path d="M0 14h56M0 22h56M0 30h56M0 38h56M0 46h56" stroke="#b9b9b9" strokeWidth="1" /><path d="M9 0v56" stroke="#e79b95" strokeWidth="1" /></Tile>, over: "pen" },
  { n: "Preview", i: <Tile fill="#f5f4f2"><clipPath id="pv"><rect x="4" y="4" width="48" height="48" rx="10" /></clipPath><g clipPath="url(#pv)"><rect width="56" height="31" fill="#9fb9ea" /><rect y="30" width="56" height="26" fill="#2d4a86" /><path d="M0 44c8-5 14 2 22-2s10 3 10 3v12H0z" fill="#e5e8ec" /><path d="M6 52c5-6 12-5 17 0z" fill="#8b6a3e" /></g></Tile>, over: "loupe" },
];
const overlays = {
  hammer: <g><path d="M43 6L21 57" stroke="#24262b" strokeWidth="7.500" strokeLinecap="round" /><path d="M33-4c6-4 13-2 18 2 3 3 7 4 11 5l-2 10c-3 2-6 1-8-2l-12-5c-1-5-4-8-7-10z" fill="#4a4d53" /></g>,
  pen: <g><path d="M51-6L31 44" stroke="#8da0b2" strokeWidth="5.500" strokeLinecap="round" /><path d="M50-5L30 43" stroke="#dfe7ee" strokeWidth="2" /><path d="M29 42l-7 16 3-18z" fill="#6b6f74" /></g>,
  loupe: <g><path d="M30 35h21l7 24H23z" fill="#e2e4e6" opacity=".92" /><path d="M33 41h15l3 14H30z" fill="#8a9196" /><rect x="28" y="27" width="25" height="13" rx="3" fill="#15161a" /></g>,
};

const Trash = () => (
  <svg width="50" height="60" viewBox="0 0 50 60">
    <defs><linearGradient id="bin"><stop stopColor="#55585a" /><stop offset=".4" stopColor="#a3a7a9" /><stop offset="1" stopColor="#626567" /></linearGradient></defs>
    <path d="M3 6l6-9 8 4 6-7 6 6 8-4 10 10-8 6H8z" fill="#e7e7e7" /><path d="M10 3l5-6 2 9zM28-4l6 8-6 3z" fill="#8a4a3c" /><path d="M19 0l4 6-6 2zM38-2l3 8-5 1z" fill="#3f5d7a" />
    <path d="M0 4c10 7 40 7 50 0l-6 52c-6 5-32 5-38 0z" fill="url(#bin)" opacity=".92" />
    <path d="M0 4c10 7 40 7 50 0" stroke="#c3c6c8" strokeWidth="1.500" fill="none" />
  </svg>
);

const answer1 = `This case appears to be missing the actual patient's clinical report summary. Therefore, I cannot
answer the user's query "hey?". I need the patient's information to provide any meaningful response.
The generic clinical findings offer some examples of how to interpret lab results in certain situations
(dehydration, hypernatremia), but they are not specific to any one patient and cannot be used in
isolation to answer a medical question. Please provide the patient's clinical report.`;
const disclaimer = `Disclaimer: The medical advice and recommendations provided by this application are for informational purposes only and
should not replace professional medical diagnosis, treatment, or advice.`;
const summary = `Blood pressure is slightly elevated at 118/78
mmHg, above the healthy range of less than
120/80 mmHg.  BMI is normal at 26.3.  The
patient has a severe allergy to bee stings,
causing anaphylactic shock.  They also have
moderate to severe allergy to penicillin,
causing hives, and a moderate allergy to
codeine, causing shortness of breath.
Immunizations include an influenza vaccine
administered on May 10, 2013.  Medications
include terbutaline (inhaler, 2 puffs twice
daily) and indomethacin (50mg capsules twice
daily with food, as needed for pain).`;

const menus = [
  ["File", 84], ["Edit", 88], ["View", 100], ["History", 128], ["Bookmarks", 176],
  ["Profiles", 133], ["Tab", 83], ["Window", 137], ["Help", 60],
];

const Message = ({ children, note }) => (
  <Card>
    <CardBody><Type>{children}</Type></CardBody>
    {note && <CardFooter><Type $size={22.3} $adv={14.4}>{disclaimer}</Type></CardFooter>}
  </Card>
);

export default function App() {
  return (
    <Desktop>
      <GlobalStyle />
      <Wallpaper width="2940" height="130">
        <defs>
          <filter id="leaves" x="0" y="0" width="100%" height="100%" colorInterpolationFilters="sRGB">
            <feTurbulence type="fractalNoise" baseFrequency="0.02 0.08" numOctaves="4" seed="8" />
            <feColorMatrix values="0.650 0.200 0 0 -0.240  0.450 0.400 0 0 -0.300  0.150 0.050 0 0 -0.050  0 0 0 0 1" />
          </filter>
        </defs>
        <rect width="2940" height="130" filter="url(#leaves)" />
      </Wallpaper>

      <MenuBar>
        <AppleMark />
        <MenuItem $w={114} $bold>Brave</MenuItem>
        {menus.map(([t, w]) => <MenuItem key={t} $w={w}>{t}</MenuItem>)}
        <StatusItems>
          <StatusSlot $w={75}>
            <svg width="42" height="36" viewBox="0 0 42 36"><circle cx="16" cy="16" r="16" fill="#222" /><path d="M24 9L8 15l8 2 2 8z" fill="#e8e5dd" /><circle cx="26" cy="22" r="15" fill="#e8e5dd" /><circle cx="26" cy="22" r="13.500" fill="#222" /><T x="26" y="28.500" fontSize="17" fontWeight="500" fill="#e8e5dd">2</T></svg>
          </StatusSlot>
          <StatusSlot $w={75}>
            <svg width="40" height="28" viewBox="0 0 40 28" fill="none" strokeLinecap="round" strokeWidth="2.600"><path d="M0 9h6l8-8.500c1-1 3-.5 3 1v25c0 1.500-2 2-3 1L6 19H0z" fill="#222" /><path d="M22 8.500c2 3.500 2 7.500 0 11" stroke="#222" /><path d="M27 5c4 5.500 4 12.500 0 18" stroke="#a09e98" /><path d="M32 1c5.500 8 5.500 18 0 26" stroke="#a09e98" /></svg>
          </StatusSlot>
          <StatusSlot $w={64}><Line s={28} w={2.2} c="#222"><circle cx="12" cy="12" r="11" /><path d="M9.500 7.500l7 4.500-7 4.500z" fill="#222" /></Line></StatusSlot>
          <StatusSlot $w={90}>
            <svg width="52" height="25" viewBox="0 0 52 25"><rect x="1" y="1" width="45" height="22.500" rx="6.500" fill="none" stroke="#8f8d88" strokeWidth="2" /><rect x="4" y="4" width="20" height="16.500" rx="4" fill="#222" /><path d="M48.500 8.500c3 1 3 6.500 0 7.500z" fill="#8f8d88" /></svg>
          </StatusSlot>
          <StatusSlot $w={74}>
            <svg width="34" height="26" viewBox="0 0 34 26" fill="none" stroke="#222" strokeWidth="4"><path d="M1.500 9.500c9-8.500 22-8.500 31 0" /><path d="M7.500 15.500c5.500-5 13.500-5 19 0" /><path d="M17 25l-5-5.300c3-2.500 7-2.500 10 0z" fill="#222" stroke="none" /></svg>
          </StatusSlot>
          <StatusSlot $w={66}><Line s={26} w={2.5} c="#222"><circle cx="9.500" cy="9.500" r="8.500" /><path d="M16 16l7 7" strokeWidth="3" /></Line></StatusSlot>
          <StatusSlot $w={63}>
            <svg width="27" height="27" viewBox="0 0 27 27"><rect x="1.200" y="1.200" width="24.600" height="10.600" rx="5.300" fill="none" stroke="#222" strokeWidth="2.400" /><circle cx="7" cy="6.500" r="3" fill="#222" /><rect y="14.500" width="27" height="12.500" rx="6.200" fill="#222" /><circle cx="20.500" cy="20.700" r="3.700" fill="#e6e3db" /></svg>
          </StatusSlot>
          <MenuItem $w={137}>Fri 28 Mar</MenuItem>
          <MenuItem $w={106} $ls={0.2}>21:18</MenuItem>
        </StatusItems>
      </MenuBar>

      <Window>
        <TabStrip>
          <TrafficLights><Light $c="#ed6b60" /><Light $c="#f5bf4f" /><Light $c="#61c554" /></TrafficLights>
          {tabs.map((t) => (
            <Tab key={t.t} $w={t.w} $active={t.active} $plain={t.plain}>
              {t.i}
              <TabTitle $active={t.active}>{t.t}</TabTitle>
              {t.active && <Line s={17} v={16} w={2.2}><path d="M1 1l14 14M15 1L1 15" /></Line>}
            </Tab>
          ))}
          <StripEnd>
            <Line s={22} v={22} w={2.4} c="#fff"><path d="M11 1v20M1 11h20" /></Line>
            <Line s={22} v={22} w={3.2} c="#fff"><path d="M2 6l9 10 9-10" /></Line>
          </StripEnd>
        </TabStrip>

        <Toolbar>
          <NavButtons>
            <svg width="18" height="28" fill="none" stroke="#85848a" strokeWidth="2.400" strokeLinecap="round"><path d="M15 1.500L3 14l12 12.500" /></svg>
            <svg width="18" height="28" fill="none" stroke="#85848a" strokeWidth="2.400" strokeLinecap="round"><path d="M3 1.500L15 14 3 26.500" /></svg>
            <svg width="30" height="30" viewBox="0 0 30 30" fill="none" stroke="#f4f4f5" strokeWidth="3" strokeLinecap="round"><path d="M25 20.500A12.500 12.500 0 1 1 26 11" /><path d="M21 11.500l7 2V6.500z" fill="#f4f4f5" strokeWidth="2" /></svg>
          </NavButtons>
          <svg width="24" height="32" viewBox="0 0 24 32" fill="none" stroke="#e4e4e7" strokeWidth="2.400" strokeLinejoin="round"><path d="M2 4a2.500 2.500 0 0 1 2.500-2.500h15A2.500 2.500 0 0 1 22 4v25.500l-10-7-10 7z" /></svg>
          <AddressBar>
            <svg width="25" height="24" viewBox="0 0 25 24" fill="none" stroke="#e4e4e7" strokeWidth="2.400" strokeLinecap="round"><circle cx="5" cy="6" r="3.800" /><path d="M11 6h10M4 18.500h9" /><circle cx="19.500" cy="18.500" r="3.800" /></svg>
            <Url>almost-md.vercel.app</Url>
            <svg width="24" height="32" viewBox="0 0 24 32" fill="none" stroke="#b5b5b8" strokeWidth="2.400" strokeLinecap="round" strokeLinejoin="round"><path d="M8 10H5a3.500 3.500 0 0 0-3.500 3.500v13A3.500 3.500 0 0 0 5 30h14a3.500 3.500 0 0 0 3.500-3.500v-13A3.500 3.500 0 0 0 19 10h-3M12 20V1.500M7.500 6L12 1.500 16.500 6" /></svg>
            <BarDivider />
            <BraveLion />
          </AddressBar>
          <Extensions>
            {extensions.map((e, i) => <ExtSlot key={i}>{e}</ExtSlot>)}
          </Extensions>
        </Toolbar>

        <BookmarksBar>
          <Line s={33} v={33} w={2.6}>
            <rect x="1" y="0" width="12.500" height="13.500" rx="4.500" /><rect x="19.500" y="0" width="12.500" height="13.500" rx="4.500" />
            <rect x="1" y="19.500" width="12.500" height="13.500" rx="4.500" /><rect x="19.500" y="19.500" width="12.500" height="13.500" rx="4.500" />
          </Line>
          <BookmarkDivider />
          {bookmarks.map((b, i) => (
            <Bookmark key={i} $w={b.w} $ls={b.ls}>
              {b.i}
              {b.dot && <Dot />}
              <span>{b.t}</span>
            </Bookmark>
          ))}
        </BookmarksBar>

        <Page>
          <PageHeader>
            <Brand><Type $size={37} $adv={24} $medium>Mr.AlmostMD</Type></Brand>
            <ThemeButton aria-label="Toggle theme">
              <Line s={38.4} w={2} c="#fff"><path d="M12 3a6 6 0 0 0 9 9 9 9 0 1 1-9-9Z" /></Line>
            </ThemeButton>
          </PageHeader>
          <Columns>
            <ReportBox>
              <Legend><Type $w={101} $medium>Report</Type></Legend>
              <FileInput><Type $w={185} $medium>Choose file</Type><Type>report.jpg</Type></FileInput>
              <Button $top={48}><Type $center $medium>1. Upload File</Type></Button>
              <SummaryLabel><Type $medium>Report Summary</Type></SummaryLabel>
              <Summary><Type>{summary}</Type></Summary>
              <Button $top={111} $danger><Type $center $medium>2. Looks Good</Type></Button>
              <ShareRow>
                <ShareText><Type $w={319} $medium>Share your thoughts</Type></ShareText>
                <ShareLinks>
                  <FaGithub size={32} /><FaYoutube size={35} /><FaLinkedin size={32} />
                </ShareLinks>
              </ShareRow>
            </ReportBox>
            <Chat>
              <AddedBadge><Check>✓</Check><Type $w={172.8} $size={22.3} $adv={14.4} $bold>Report Added</Type></AddedBadge>
              <Message>hey</Message>
              <Message note>{answer1}</Message>
              <Message>How to take the medication?</Message>
              <Message note>
                {"The patient takes two medications:\n"}
                <b>Terbutaline (inhaler):</b>
                {" 2 puffs twice daily. This means the patient should take two puffs of the\nterbutaline inhaler in the morning and two puffs in the evening.\n"}
                <b>Indomethacin (50mg capsules):</b>
                {" Twice daily with food, as needed for pain. This means the patient should\ntake one 50mg capsule of indomethacin with a meal twice a day (e.g., breakfast and dinner) only if they\nare experiencing pain. It's important to take this medication with food to reduce the risk of stomach\nupset."}
              </Message>
            </Chat>
          </Columns>
        </Page>
      </Window>

      <DockArea>
        <DockBar>
          {dock.map((d) => (
            <DockSlot key={d.n} aria-label={d.n}>{d.i}{d.run && <RunningDot />}</DockSlot>
          ))}
          <DockDivider $m="-3px 17px 0 15px" />
          {utilities.map((u) => (
            <DockSlot key={u.n} $w={74} aria-label={u.n}>
              <svg width="56" height="56" viewBox="0 0 56 56">{u.i}{overlays[u.over]}</svg>
            </DockSlot>
          ))}
          <DockDivider $m="-3px 28px 0 15px" />
          <Trash />
        </DockBar>
      </DockArea>
    </Desktop>
  );
}
